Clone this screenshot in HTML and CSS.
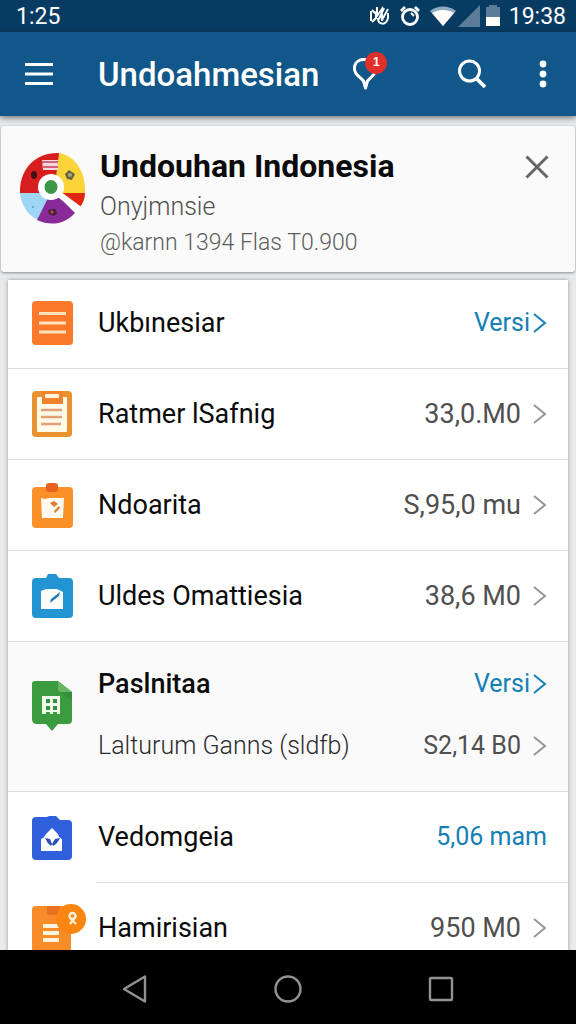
FILE: index.html
```html
<!DOCTYPE html>
<html lang="id">
<head>
<meta charset="utf-8">
<meta name="viewport" content="width=device-width, initial-scale=1">
<title>Undoahmesian</title>
<link rel="stylesheet" href="styles.css">
</head>
<body>
<div class="status-bar">
  <span>1:25</span>
  <div class="status-icons">
    <svg width="20" height="20" viewBox="0 0 20 20" fill="none" stroke="currentColor" stroke-width="2" aria-hidden="true"><path d="M1 5v10M2 4l4 4v4l-4 4M7 1v9l5-7v12M14 2l-5 11M18 3l-6 11M8 12c0 7 8 8 10 0V7M5 6l3 3"/></svg>
    <svg width="22" height="22" viewBox="0 0 22 22" fill="none" stroke="currentColor" aria-hidden="true"><circle cx="11" cy="12" r="7.500" stroke-width="2.800"/><path d="M2 6l4-4M20 6l-4-4" stroke-width="2.800"/><path d="M12 8l3 3" stroke-width="2"/></svg>
    <svg width="26" height="20" viewBox="0 0 26 20" aria-hidden="true"><path d="M0 5C7-1 19-1 26 5L13 20z" fill="#8fa9bf"/><path d="M2 7c6-4 16-4 22 0L13 20z" fill="#fff"/></svg>
    <svg width="22" height="22" viewBox="0 0 22 22" aria-hidden="true"><path d="M22 0v22H0z" fill="#5b7d9a"/></svg>
    <svg width="14" height="22" viewBox="0 0 14 22" aria-hidden="true"><path d="M0 2h3V0h8v2h3v10H0z" fill="#5b7d9a"/><path d="M0 12h14v9H0z" fill="#fff"/></svg>
    <span class="clock">19:38</span>
  </div>
</div>

<header class="app-bar">
  <button class="icon-button" aria-label="Menu"><svg width="28" height="24" viewBox="0 0 28 24" fill="none" stroke="currentColor" stroke-width="3.2" aria-hidden="true"><path d="M0 2.5h28M0 12h28M0 21.500h28"/></svg></button>
  <h1 class="app-title">Undoahmesian</h1>
  <button class="icon-button pin" aria-label="Notifikasi"><svg width="24" height="32" viewBox="0 0 24 32" fill="none" stroke="currentColor" stroke-width="3" stroke-linejoin="round" aria-hidden="true"><path d="M15 2C7 0 1 4 1.500 11c0 6 6 8 9 12l2 7 2-7c3-4 6-5 7-8"/></svg><span class="badge">1</span></button>
  <button class="icon-button search" aria-label="Cari"><svg width="30" height="30" viewBox="0 0 30 30" fill="none" stroke="currentColor" stroke-width="3" aria-hidden="true"><circle cx="12.500" cy="12" r="10"/><path d="M19.500 19.500l8.500 8.500" stroke-width="3.800"/></svg></button>
  <button class="icon-button" aria-label="Opsi lain"><svg width="8" height="28" viewBox="0 0 8 28" fill="currentColor" aria-hidden="true"><circle cx="4" cy="4" r="3.400"/><circle cx="4" cy="14" r="3.400"/><circle cx="4" cy="24" r="3.400"/></svg></button>
</header>

<main class="content">
  <section class="banner">
    <svg class="banner-logo" width="66" height="72" viewBox="0 0 66 72" aria-hidden="true">
      <path d="M0 41C-1 18 15 0 39 1V41z" fill="#d71e1e"/>
      <path d="M39 1c17 3 27 20 26 40H34z" fill="#fbd43a"/>
      <path d="M34 41h31c0 6-2 10-5 14z" fill="#df260f"/>
      <path d="M0 41h34L18 68C7 63 1 52 0 41z" fill="#9fd5f5"/>
      <path d="M32 38l23 23c-11 12-25 13-38 7z" fill="#882b98"/>
      <path d="M36 40l23 17" stroke="#fff" stroke-width="6"/>
      <path d="M22 8h16v10H23z" fill="#f3d9df"/><path d="M22 10h16M23 15h15" stroke="#c93b51" stroke-width="1.500"/>
      <ellipse cx="14" cy="23" rx="3" ry="4" fill="#421012"/>
      <path d="M45 22l4-4 6 4-3 6-5-1z" fill="#676643"/><circle cx="50" cy="23" r="2" fill="#aaa77d"/>
      <path d="M28 58l7-1 2 4-3 3-5-2z" fill="#432034"/><circle cx="32" cy="60" r="1.500" fill="#cf5548"/>
      <circle cx="13" cy="55" r="1" fill="#6396ba"/>
      <circle cx="31" cy="35" r="13" fill="#fff"/><ellipse cx="31" cy="35" rx="6.500" ry="7" fill="#3c9846"/>
    </svg>
    <div class="banner-text">
      <h2 class="banner-title">Undouhan Indonesia</h2>
      <p class="banner-subtitle">Onyjmnsie</p>
      <p class="banner-meta">@karnn 1394 Flas T0.900</p>
    </div>
    <button class="icon-button close" aria-label="Tutup"><svg width="24" height="24" viewBox="0 0 24 24" fill="none" stroke="currentColor" stroke-width="3" aria-hidden="true"><path d="M1.500 1.500l21 21M22.500 1.500l-21 21"/></svg></button>
  </section>

  <ul class="list">
    <li class="row first">
      <svg class="row-icon" width="42" height="46" viewBox="0 0 42 46" aria-hidden="true"><rect y="1" width="41" height="44" rx="4" fill="#fb792b"/><path d="M7 13.500h27M7 23h27M7 32h27" stroke="#ffe3bd" stroke-width="2.800"/></svg>
      <span class="label">Ukbınesiar</span>
      <a class="link" href="#">Versi<svg class="chevron" width="14" height="20" viewBox="0 0 14 20" aria-hidden="true"><path d="M1 1l11 9-11 9"/></svg></a>
    </li>
    <li class="row">
      <svg class="row-icon" width="42" height="46" viewBox="0 0 42 46" aria-hidden="true"><rect width="40" height="46" rx="4" fill="#e9922f"/><rect x="5" y="6" width="30" height="35" rx="1" fill="#fffaea"/><path d="M10 0h21v13H10z" fill="#ef8430"/><rect x="13" y="3" width="14" height="4" rx="1" fill="#fff4dc"/><path d="M9 19h21M9 26h21M9 33h20" stroke="#e4a074" stroke-width="2.500"/></svg>
      <span class="label">Ratmer lSafnig</span>
      <span class="value">33,0.M0</span>
      <svg class="chevron" width="14" height="20" viewBox="0 0 14 20" aria-hidden="true"><path d="M1 1l11 9-11 9"/></svg>
    </li>
    <li class="row">
      <svg class="row-icon" width="42" height="46" viewBox="0 0 42 46" aria-hidden="true"><rect y="5" width="41" height="41" rx="4" fill="#f99128"/><rect x="14" y="1" width="12" height="9" rx="3" fill="#e8621f"/><path d="M9 16l4 1 4-1h15l-1 20H10z" fill="#fffaf0"/><path d="M18 21l4-2 4 3-4 3zM27 24l1 2-5 5-1-2z" fill="#df7a35"/></svg>
      <span class="label">Ndoarita</span>
      <span class="value">S,95,0 mu</span>
      <svg class="chevron" width="14" height="20" viewBox="0 0 14 20" aria-hidden="true"><path d="M1 1l11 9-11 9"/></svg>
    </li>
    <li class="row">
      <svg class="row-icon" width="42" height="46" viewBox="0 0 42 46" aria-hidden="true"><path d="M4 5h10l2-4h8l3 4h10q4 0 4 4v32q0 4-4 4H4q-4 0-4-4V9q0-4 4-4z" fill="#2394d2"/><path d="M9 18l5-2h11l6 3v17H9z" fill="#fff"/><path d="M28 19l-1 4-9 7 1-4z" fill="#2378b5"/></svg>
      <span class="label">Uldes Omattiesia</span>
      <span class="value">38,6 M0</span>
      <svg class="chevron" width="14" height="20" viewBox="0 0 14 20" aria-hidden="true"><path d="M1 1l11 9-11 9"/></svg>
    </li>
    <li class="row group">
      <svg class="row-icon" width="42" height="52" viewBox="0 0 42 52" aria-hidden="true"><path d="M3 1h23l14 11v28q0 4-4 4H26l-6 7-6-7H5q-5 0-5-5V4q0-3 3-3z" fill="#3b9c3f"/><path d="M26 1l14 11H29q-3 0-3-3z" fill="#68b568"/><path d="M28 12l12 9v-9z" fill="#34903a"/><path d="M10 16h18v18h-3v-2h-4v2h-3v-2h-4v2h-4z" fill="#efffe9"/><path d="M14 19h4v4h-4zM21 19h4v4h-4zM14 26h4v4h-4zM21 26h4v4h-4z" fill="#369043"/></svg>
      <div class="group-lines">
        <div class="line">
          <span class="label strong">Paslnitaa</span>
          <a class="link" href="#">Versi<svg class="chevron" width="14" height="20" viewBox="0 0 14 20" aria-hidden="true"><path d="M1 1l11 9-11 9"/></svg></a>
        </div>
        <div class="line">
          <span class="label light">Lalturum Ganns (sldfb)</span>
          <span class="value compact">S2,14 B0</span>
          <svg class="chevron" width="14" height="20" viewBox="0 0 14 20" aria-hidden="true"><path d="M1 1l11 9-11 9"/></svg>
        </div>
      </div>
    </li>
    <li class="row inset">
      <svg class="row-icon" width="42" height="46" viewBox="0 0 42 46" aria-hidden="true"><path d="M4 3h11l2-1h7l4 4h8q4 0 4 4v32q0 4-4 4H4q-4 0-4-4V7q0-4 4-4z" fill="#305fdc"/><path d="M9 25l3-2 2-3 6-6 6 6 1 3 3 2v12H9z" fill="#fff"/><path d="M13 24l5 1 2 5-1 2q-4-3-6-8zM28 24l-5 1-3 5 1 2q5-3 7-8z" fill="#2b4fb4"/><path d="M10 19l3 2-3 4zM30 19l-3 2 3 4z" fill="#305fdc"/></svg>
      <span class="label">Vedomgeia</span>
      <a class="link" href="#">5,06 mam</a>
    </li>
    <li class="row">
      <svg class="row-icon badged" width="56" height="48" viewBox="0 0 56 48" aria-hidden="true"><rect y="2" width="39" height="46" rx="4" fill="#f78c28"/><path d="M15 2h13v9H18q-3 0-3-3z" fill="#e8721f"/><path d="M11 22h16M11 29h16M11 36h16" stroke="#fff4dd" stroke-width="3.800"/><circle cx="39" cy="15" r="15" fill="#f98613"/><circle cx="40.500" cy="12" r="3" fill="none" stroke="#fff0d3" stroke-width="2.400"/><path d="M44 12l-6 8M39 15l5 5" stroke="#fff0d3" stroke-width="2.200"/></svg>
      <span class="label">Hamirisian</span>
      <span class="value">950 M0</span>
      <svg class="chevron" width="14" height="20" viewBox="0 0 14 20" aria-hidden="true"><path d="M1 1l11 9-11 9"/></svg>
    </li>
  </ul>
</main>

<nav class="nav-bar" aria-label="Navigasi sistem">
  <button class="icon-button" aria-label="Kembali"><svg width="28" height="28" viewBox="0 0 28 28" aria-hidden="true"><path d="M24 1.500v25L3 14z"/></svg></button>
  <button class="icon-button" aria-label="Beranda"><svg width="28" height="28" viewBox="0 0 28 28" aria-hidden="true"><circle cx="14" cy="14" r="12.500"/></svg></button>
  <button class="icon-button" aria-label="Terbaru"><svg width="28" height="28" viewBox="0 0 28 28" aria-hidden="true"><rect x="3" y="3" width="22" height="22" rx="1"/></svg></button>
</nav>
</body>
</html>
```

FILE: styles.css
```css
* {
  box-sizing: border-box;
}

body {
  margin: 0;
  height: 100vh;
  display: flex;
  flex-direction: column;
  overflow: hidden;
  background: #e9eaeb;
  color: #0b0b0b;
  font-family: Roboto, "Liberation Sans", sans-serif;
}

h1, h2, p, ul {
  margin: 0;
  padding: 0;
}

svg {
  display: block;
  flex: none;
}

.icon-button {
  flex: none;
  padding: 0;
  border: 0;
  background: none;
  color: inherit;
}

.status-bar {
  flex: none;
  display: flex;
  align-items: center;
  justify-content: space-between;
  height: 32px;
  padding: 0 10px 0 16px;
  background: #083b62;
  color: #fff;
  font-size: 23px;
}

.status-icons {
  display: flex;
  align-items: center;
  gap: 9px;
}

.status-icons svg:nth-of-type(4) {
  margin: 0 -3px 0 -7px;
}

.app-bar {
  flex: none;
  z-index: 1;
  display: flex;
  align-items: center;
  height: 84px;
  padding: 0 29px 0 25px;
  background: #115789;
  color: #fff;
  box-shadow: 0 2px 6px rgba(0, 0, 0, 0.5);
}

.app-title {
  margin-left: 45px;
  font-size: 33px;
  font-weight: 500;
}

.pin {
  position: relative;
  margin-left: 34px;
}

.badge {
  position: absolute;
  top: -6px;
  right: -10px;
  width: 22px;
  height: 22px;
  border-radius: 50%;
  background: #df3029;
  color: #fff;
  font-size: 12px;
  font-weight: 700;
  line-height: 20px;
}

.search {
  margin: 0 52px 0 auto;
}

.content {
  flex: 1;
  min-height: 0;
  overflow: hidden;
  padding-top: 10px;
}

.banner {
  display: flex;
  align-items: flex-start;
  margin: 0 1px;
  padding: 20px 26px 14px 19px;
  border-radius: 3px;
  background: #fafafa;
  box-shadow: 0 1px 3px rgba(0, 0, 0, 0.4);
}

.banner-logo {
  margin-top: 6px;
}

.banner-text {
  flex: 1;
  margin-left: 14px;
}

.banner-title {
  font-size: 32px;
  font-weight: 700;
  line-height: 40px;
}

.banner-subtitle {
  color: #505050;
  font-size: 25px;
  font-weight: 300;
  line-height: 42px;
}

.banner-meta {
  color: #5c5c5c;
  font-size: 23px;
  font-weight: 300;
  line-height: 30px;
}

.close {
  margin-top: 9px;
  color: #666;
}

.list {
  margin: 8px 8px 0;
  list-style: none;
  background: #fff;
  box-shadow: 0 0 4px rgba(0, 0, 0, 0.35);
}

.row {
  position: relative;
  display: flex;
  align-items: center;
  min-height: 91px;
  padding: 0 21px 0 24px;
  border-bottom: 1px solid #dedede;
}

.first {
  min-height: 89px;
  padding-bottom: 2px;
}

.inset {
  border-bottom-color: transparent;
}

.inset::after {
  content: "";
  position: absolute;
  right: 0;
  bottom: -1px;
  left: 88px;
  border-bottom: 1px solid #dedede;
}

.row-icon {
  margin-right: 24px;
}

.badged {
  margin-right: 10px;
}

.label {
  flex: 1;
  font-size: 27px;
  line-height: 32px;
}

.strong {
  font-weight: 500;
}

.light {
  color: #2c2c2c;
  font-size: 25px;
  font-weight: 300;
}

.value {
  color: #505050;
  font-size: 27px;
  line-height: 32px;
}

.compact {
  font-size: 25px;
}

.link {
  display: flex;
  align-items: center;
  gap: 3px;
  color: #1480b5;
  font-size: 25px;
  line-height: 32px;
  text-decoration: none;
}

.chevron {
  fill: none;
  stroke: #969696;
  stroke-width: 2;
}

.value + .chevron {
  margin-left: 12px;
}

.link .chevron {
  stroke: currentColor;
}

.group {
  align-items: flex-start;
  padding-top: 11px;
  padding-bottom: 14px;
  background: #fafafa;
}

.group .row-icon {
  margin-top: 27px;
}

.group-lines {
  flex: 1;
}

.line {
  display: flex;
  align-items: center;
  height: 62px;
}

.nav-bar {
  flex: none;
  z-index: 1;
  display: flex;
  align-items: center;
  justify-content: center;
  gap: 125px;
  height: 74px;
  padding-top: 4px;
  background: #000;
}

.nav-bar svg {
  fill: none;
  stroke: #929292;
  stroke-width: 2.4;
  stroke-linejoin: round;
}
```
